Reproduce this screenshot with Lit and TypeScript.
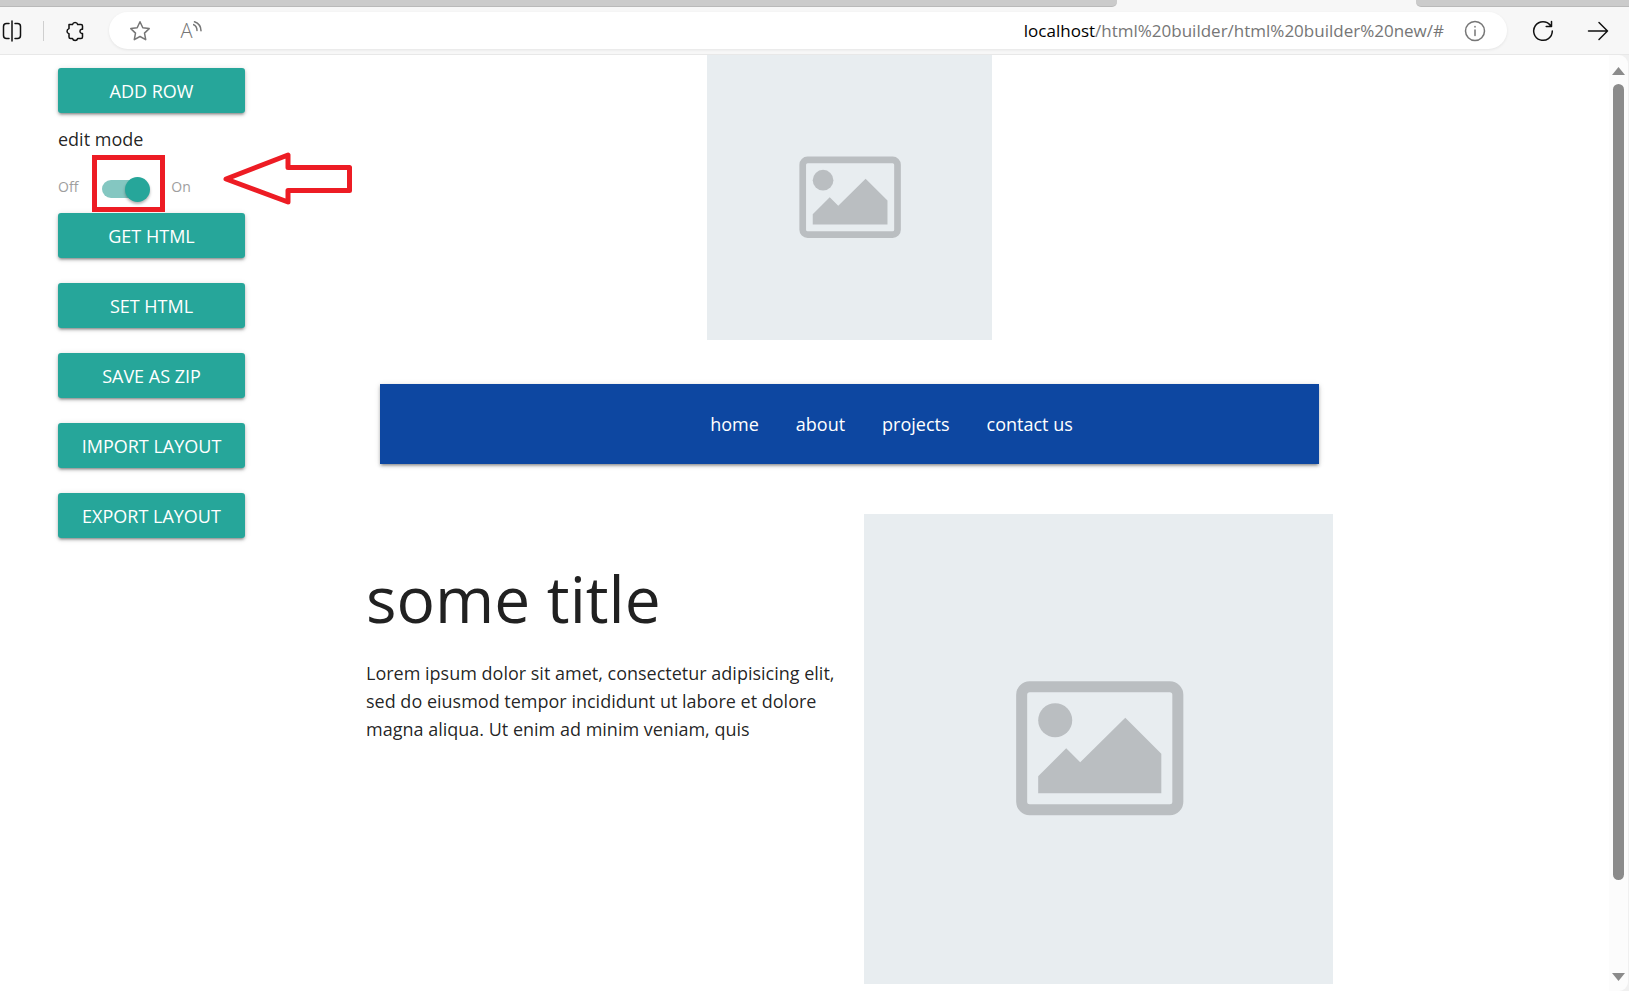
import { LitElement, html, css } from "lit";
import { customElement, state } from "lit/decorators.js";

@customElement("image-placeholder")
class ImagePlaceholder extends LitElement {
  static styles = css`
    :host {
      display: block;
    }
    .picture {
      display: block;
      width: 100%;
      height: auto;
      background: #e8edf0;
    }
  `;

  render() {
    return html`
      <svg class="picture" viewBox="0 0 469 469" role="img" aria-label="Image placeholder">
        <rect x="157.5" y="172.5" width="156" height="123" rx="8" fill="none" stroke="#babec1" stroke-width="11" />
        <circle cx="191" cy="206" r="17" fill="#babec1" />
        <path d="M174 262 202 234 216 248 261 203.500 297 239.500V279H174Z" fill="#babec1" />
      </svg>
    `;
  }
}

@customElement("browser-bar")
class BrowserBar extends LitElement {
  static styles = css`
    :host {
      display: block;
      background: #f7f7f7;
      font-family: "Open Sans", "Noto Sans", sans-serif;
    }
    .tabs {
      display: flex;
      height: 7px;
    }
    .tab {
      background: #cbcbcb;
      box-sizing: border-box;
      border-bottom: 1px solid #b9b9b9;
    }
    .before {
      flex: 1117 1 0;
      border-bottom-right-radius: 5px;
    }
    .active {
      flex: 299 1 0;
    }
    .after {
      flex: 213 1 0;
      border-bottom-left-radius: 5px;
    }
    .tools {
      display: flex;
      align-items: center;
      height: 48px;
      box-sizing: border-box;
      border-bottom: 1px solid #e8e8e8;
    }
    .tool {
      display: flex;
      align-items: center;
      justify-content: center;
      flex: none;
      width: 32px;
      height: 32px;
      padding: 0;
      border: 0;
      background: none;
      color: #111;
      font: inherit;
    }
    .split {
      width: 24px;
    }
    .rule {
      width: 1px;
      height: 20px;
      margin: 0 15px 0 19px;
      background: #cfcfcf;
    }
    .pill {
      flex: 1;
      display: flex;
      align-items: center;
      height: 37px;
      margin: 0 20px 0 18px;
      padding: 0 16px 0 15px;
      border-radius: 19px;
      background: #fff;
      box-shadow: 0 1px 3px rgba(0, 0, 0, 0.08);
    }
    .pill .tool {
      color: #767676;
    }
    .read {
      margin-left: 19px;
    }
    .url {
      flex: 1;
      text-align: right;
      padding-right: 15px;
      font-size: 17px;
      line-height: 24px;
      color: #767676;
      white-space: nowrap;
    }
    .host {
      color: #000;
    }
    .forward {
      margin: 0 15px 0 23px;
    }
    .letter {
      font-size: 20px;
      line-height: 24px;
      font-weight: 300;
    }
    svg {
      display: block;
      fill: none;
      stroke: currentColor;
      stroke-width: 1.5;
      stroke-linecap: round;
      stroke-linejoin: round;
    }
  `;

  render() {
    return html`
      <div class="tabs">
        <div class="tab before"></div>
        <div class="active"></div>
        <div class="tab after"></div>
      </div>
      <div class="tools">
        <button class="tool split" aria-label="Split screen">
          <svg width="20" height="22" viewBox="0 0 20 22">
            <path d="M7 3.500H4.500a3 3 0 0 0-3 3v9a3 3 0 0 0 3 3H7M13 3.500h2.500a3 3 0 0 1 3 3v9a3 3 0 0 1-3 3H13M10 1v20" />
          </svg>
        </button>
        <span class="rule"></span>
        <button class="tool" aria-label="Extensions">
          <svg width="20" height="22" viewBox="0 0 20 22">
            <path
              d="M4 4.500h3.500a2.700 2.700 0 0 1 5.200 0H16a1.500 1.500 0 0 1 1.500 1.500v3.200h-1a2.200 2.200 0 0 0 0 4.200h1V17a1.500 1.500 0 0 1-1.500 1.500h-3.300a2.700 2.700 0 0 1-5.200 0H5.500A1.500 1.500 0 0 1 4 17v-3.200a2.700 2.700 0 0 1 0-5.200Z"
            />
          </svg>
        </button>
        <div class="pill">
          <button class="tool" aria-label="Add to favourites">
            <svg width="22" height="22" viewBox="0 0 22 22">
              <path d="m11 1.800 2.800 6 6.400.8-4.700 4.500 1.200 6.600-5.700-3.200-5.700 3.200 1.200-6.600L1.800 8.600l6.400-.8Z" />
            </svg>
          </button>
          <button class="tool read" aria-label="Read aloud">
            <span class="letter">A</span>
            <svg width="9" height="20" viewBox="0 0 9 20">
              <path d="M0 3.500c2.500 1 4 3 4 6M1.500 .8c4 1.500 6.500 5 6.500 9" />
            </svg>
          </button>
          <div class="url"><span class="host">localhost</span>/html%20builder/html%20builder%20new/#</div>
          <button class="tool" aria-label="Site information">
            <svg width="22" height="22" viewBox="0 0 22 22">
              <circle cx="11" cy="11" r="9.500" />
              <path d="M11 10v5.500M11 6.600v.3" />
            </svg>
          </button>
        </div>
        <button class="tool" aria-label="Refresh">
          <svg width="22" height="22" viewBox="0 0 22 22">
            <path d="M18.500 5.500A9.300 9.300 0 1 0 20.300 11M19.500 1.500v5h-5.300" />
          </svg>
        </button>
        <button class="tool forward" aria-label="Go">
          <svg width="22" height="22" viewBox="0 0 22 22">
            <path d="M1.500 11h19M12 2.500l8.500 8.500-8.500 8.500" />
          </svg>
        </button>
      </div>
    `;
  }
}

@customElement("app-root")
class AppRoot extends LitElement {
  @state() editing = true;

  static styles = css`
    :host {
      display: flex;
      flex-direction: column;
      height: 100vh;
      overflow: hidden;
      background: #fff;
      color: rgba(0, 0, 0, 0.87);
      font-family: "Open Sans", "Noto Sans", sans-serif;
      font-size: 18px;
      line-height: 28px;
    }
    .view {
      flex: 1;
      min-height: 0;
      display: flex;
      background: #f0f0f0;
    }
    .page {
      flex: 1;
      min-width: 0;
      overflow: hidden;
      display: grid;
      grid-template-columns: 187px minmax(0, 1fr);
      align-items: start;
      column-gap: 121px;
      padding: 0 276px 0 58px;
      background: #fff;
    }
    .side {
      display: flex;
      flex-direction: column;
      gap: 25px;
      padding-top: 13px;
    }
    .action {
      height: 45px;
      padding: 0;
      border: 0;
      border-radius: 3px;
      background: #26a69a;
      color: #fff;
      font: inherit;
      text-transform: uppercase;
      box-shadow: 0 2px 3px rgba(0, 0, 0, 0.24), 0 3px 2px -2px rgba(0, 0, 0, 0.2), 0 1px 6px rgba(0, 0, 0, 0.12);
    }
    .mode {
      margin: -13px 0 -25px;
      height: 88px;
    }
    .switch {
      position: relative;
      display: flex;
      align-items: center;
      height: 24px;
      margin-top: 22px;
      color: #9e9e9e;
      font-size: 14px;
    }
    .toggle {
      appearance: none;
      position: relative;
      width: 45px;
      height: 18px;
      margin: 3px 24px 0;
      border-radius: 9px;
      background: #84c7c1;
    }
    .toggle::before {
      content: "";
      position: absolute;
      top: -3px;
      left: -4px;
      width: 25px;
      height: 25px;
      border-radius: 50%;
      background: #f1f1f1;
      box-shadow: 0 2px 3px rgba(0, 0, 0, 0.3);
    }
    .toggle:checked::before {
      left: 23px;
      background: #26a69a;
    }
    .frame {
      position: absolute;
      left: 34px;
      top: -20px;
      box-sizing: border-box;
      width: 73px;
      height: 57px;
      border: 5px solid #ed1c24;
      pointer-events: none;
    }
    .arrow {
      position: absolute;
      left: 164px;
      top: -23px;
      width: 132px;
      height: 56px;
      pointer-events: none;
    }
    .rows {
      display: flex;
      flex-direction: column;
    }
    .logo {
      align-self: center;
      width: 285px;
      margin-bottom: 44px;
    }
    .menu {
      margin: 0 14px 50px;
      height: 80px;
      background: #0d47a1;
      box-shadow: 0 2px 3px rgba(0, 0, 0, 0.24), 0 3px 2px -2px rgba(0, 0, 0, 0.2), 0 1px 6px rgba(0, 0, 0, 0.12);
    }
    .links {
      display: flex;
      align-items: center;
      justify-content: center;
      gap: 37px;
      height: 100%;
      margin: 0;
      padding: 0 0 0 84px;
      list-style: none;
    }
    .link {
      color: #fff;
      text-decoration: none;
    }
    .split {
      display: grid;
      grid-template-columns: repeat(2, minmax(0, 1fr));
      column-gap: 28px;
    }
    .title {
      margin: 49px 0 24px;
      font-size: 64px;
      line-height: 72px;
      font-weight: 400;
      color: #212121;
    }
    .text {
      margin: 0;
    }
    .scroll {
      flex: none;
      width: 19px;
      box-sizing: border-box;
      margin-right: 1px;
      padding: 12px 0 10px;
      display: flex;
      flex-direction: column;
      align-items: center;
      gap: 9px;
      border-radius: 0 9px 9px 0;
      background: #fcfcfc;
    }
    .track {
      flex: 1;
      display: flex;
      flex-direction: column;
    }
    .thumb {
      width: 11px;
      flex: 19 1 0;
      border-radius: 6px;
      background: #8b8b8b;
    }
    .rest {
      flex: 2 1 0;
    }
    .tip {
      display: block;
      fill: #8b8b8b;
    }
  `;

  private onToggle(e: Event) {
    this.editing = (e.target as HTMLInputElement).checked;
  }

  private action(name: string) {
    return html`<button class="action">${name}</button>`;
  }

  render() {
    return html`
      <browser-bar></browser-bar>
      <div class="view">
        <main class="page">
          <aside class="side">
            ${this.action("Add row")}
            <div class="mode">
              <div>edit mode</div>
              <label class="switch">
                Off
                <input
                  class="toggle"
                  type="checkbox"
                  aria-label="edit mode"
                  .checked=${this.editing}
                  @change=${this.onToggle}
                />
                On
                <span class="frame"></span>
                <svg class="arrow" viewBox="0 0 132 56" aria-hidden="true">
                  <path
                    d="M4 27 66 3V15.500H127.500V38.500H66V50Z"
                    fill="none"
                    stroke="#ed1c24"
                    stroke-width="5"
                    stroke-linejoin="round"
                  />
                </svg>
              </label>
            </div>
            ${["Get html", "Set html", "Save as zip", "Import layout", "Export layout"].map((n) => this.action(n))}
          </aside>
          <div class="rows">
            <image-placeholder class="logo"></image-placeholder>
            <nav class="menu">
              <ul class="links">
                ${["home", "about", "projects", "contact us"].map(
                  (n) => html`<li><a class="link" href="#">${n}</a></li>`
                )}
              </ul>
            </nav>
            <section class="split">
              <div>
                <h2 class="title">some title</h2>
                <p class="text">
                  Lorem ipsum dolor sit amet, consectetur adipisicing elit, sed do eiusmod tempor incididunt ut labore
                  et dolore magna aliqua. Ut enim ad minim veniam, quis
                </p>
              </div>
              <image-placeholder></image-placeholder>
            </section>
          </div>
        </main>
        <div class="scroll" aria-hidden="true">
          <svg class="tip" width="13" height="8" viewBox="0 0 13 8"><path d="M0 8 6.500 0 13 8Z" /></svg>
          <div class="track">
            <div class="thumb"></div>
            <div class="rest"></div>
          </div>
          <svg class="tip" width="13" height="8" viewBox="0 0 13 8"><path d="M0 0h13L6.500 8Z" /></svg>
        </div>
      </div>
    `;
  }
}
